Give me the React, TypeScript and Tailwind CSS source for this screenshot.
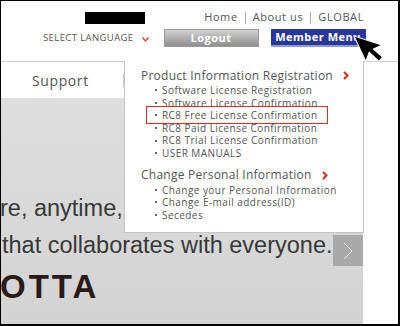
import {ReactNode} from "react";

const productItems = [
  "Software License Registration",
  "Software License Confirmation",
  "RC8 Free License Confirmation",
  "RC8 Paid License Confirmation",
  "RC8 Trial License Confirmation",
  "USER MANUALS",
];

const personalItems = [
  "Change your Personal Information",
  "Change E-mail address(ID)",
  "Secedes",
];

const RedChevron = () => (
  <svg width="6" height="9" viewBox="0 0 6 9" className="shrink-0">
    <path d="M1 1 L4.5 4.5 L1 8" fill="none" stroke="#e0261b" strokeWidth="2" />
  </svg>
);

const MenuItem = ({children, boxed}: {children: ReactNode; boxed?: boolean}) => (
  <li className="relative flex items-center h-[12.6px] pl-[14px]">
    <span className="w-[2px] h-[2px] bg-[#666] mr-[5px]" />
    <span>{children}</span>
    {boxed && (
      <span className="absolute left-[5px] top-[-3px] w-[182px] h-[18px] border border-[#e02a2a]" />
    )}
  </li>
);

export default function App() {
  return (
    <div
      className="relative w-[400px] h-[326px] overflow-hidden bg-white border-l border-t border-r-2 border-b-2 border-black text-[#555]"
      style={{fontFamily: '"Open Sans", "Noto Sans", sans-serif'}}>
      {/* header */}
      <header className="h-[60px]">
        <div className="flex items-center pt-[10px] h-[23px]">
          <div className="ml-[84px] w-[60px] h-[12px] bg-black" />
          <nav className="ml-auto mr-[34px] flex items-center text-[11px] tracking-[0.6px] text-[#555]">
            <span>Home</span>
            <span className="mx-[7px] w-px h-[12px] bg-[#aaa]" />
            <span>About us</span>
            <span className="mx-[7px] w-px h-[12px] bg-[#aaa]" />
            <span>GLOBAL</span>
          </nav>
        </div>
        <div className="flex items-center mt-[5px] h-[18px]">
          <span className="ml-[42px] text-[9.5px] tracking-[0.4px] text-[#555]">SELECT LANGUAGE</span>
          <svg width="7" height="5" viewBox="0 0 7 5" className="ml-[8px] mt-[2px]">
            <path d="M0.5 0.5 L3.5 3.8 L6.5 0.5" fill="none" stroke="#e0261b" strokeWidth="1.2" />
          </svg>
          <button className="ml-[15px] w-[95px] h-[18px] bg-gradient-to-b from-[#d2d2d2] to-[#8e8e8e] border border-[#9a9a9a] text-white text-[11px] font-bold tracking-[0.5px]">
            Logout
          </button>
          <button className="ml-[12px] w-[95px] h-[18px] bg-[#2a3798] border-b-2 border-[#8e9ad0] text-white text-[11px] font-bold tracking-[0.5px]">
            Member Menu
          </button>
        </div>
      </header>

      {/* nav bar */}
      <div className="flex items-center h-[37px] border-t border-[#cfcfcf]">
        <span className="ml-[31px] text-[14px] tracking-[0.6px] text-[#555]">Support</span>
        <span className="ml-[34px] w-px h-[13px] bg-[#c8c8c8]" />
      </div>

      {/* hero */}
      <div className="flex h-[226px]">
        <div className="relative w-[362px] bg-gradient-to-b from-[#dedede] to-[#d3d3d3] overflow-hidden"
          style={{fontFamily: '"Liberation Sans", Arial, sans-serif'}}>
          <div className="pt-[92px] text-[23.5px] leading-[37px] text-[#383838]">
            <div className="-ml-[1px]">re, anytime,</div>
            <div className="ml-[1px]">that collaborates with everyone.</div>
          </div>
          <div className="mt-[5px] -ml-[1px] text-[33px] leading-[36px] font-black tracking-[3px] text-[#2a1a18]">
            OTTA
          </div>
          <div className="absolute left-[332px] top-[137px] w-[30px] h-[31px] bg-[#a9a9a9] flex items-center justify-center">
            <svg width="10" height="18" viewBox="0 0 10 18">
              <path d="M1 1 L9 9 L1 17" fill="none" stroke="#f4f4f4" strokeWidth="1" />
            </svg>
          </div>
        </div>
        <div className="flex-1 bg-white" />
      </div>

      {/* dropdown */}
      <div className="absolute left-[123px] top-[60px] w-[240px] h-[172px] bg-white border-x border-b border-[#c4c4c4] pt-[7px] pl-[16px] text-[#555]">
        <div className="flex items-center gap-[10px] text-[12px] tracking-[0.25px] h-[15px]">
          <span>Product Information Registration</span>
          <RedChevron />
        </div>
        <ul className="mt-[1px] text-[10px] tracking-[0.45px] leading-[12.6px]">
          {productItems.map((t, i) => (
            <MenuItem key={t} boxed={i === 2}>{t}</MenuItem>
          ))}
        </ul>
        <div className="mt-[8px] flex items-center gap-[10px] text-[12px] tracking-[0.25px] h-[15px]">
          <span>Change Personal Information</span>
          <RedChevron />
        </div>
        <ul className="mt-[1px] text-[10px] tracking-[0.45px] leading-[12.6px]">
          {personalItems.map((t) => (
            <MenuItem key={t}>{t}</MenuItem>
          ))}
        </ul>
      </div>

      {/* mouse cursor */}
      <svg className="absolute left-[351px] top-[33px]" width="34" height="42" viewBox="0 0 34 42">
        <path d="M2 2 L2 30 L9 23 L14 35.5 L19 33 L14 22 L23.5 22 Z" fill="#000" stroke="#fff" strokeWidth="1" transform="rotate(-25 2 2)" />
      </svg>
    </div>
  );
}
